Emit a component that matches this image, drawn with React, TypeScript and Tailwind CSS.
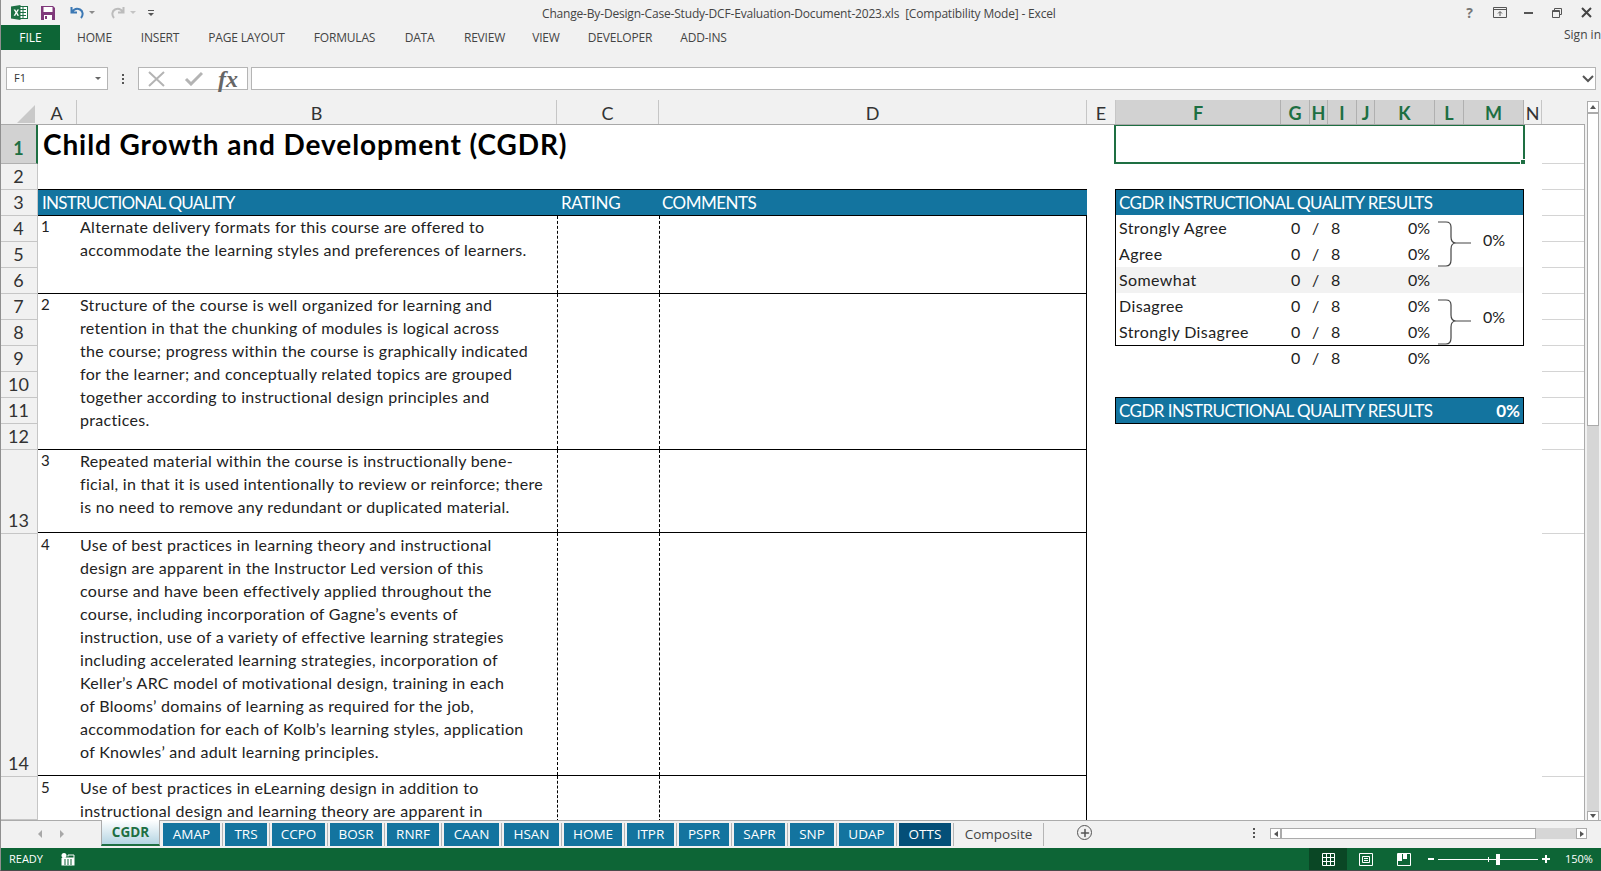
import { Plus } from 'lucide-react';

const ribbonTabs = [
  { label: 'HOME', w: 'w-[69px]' },
  { label: 'INSERT', w: 'w-[62px]' },
  { label: 'PAGE LAYOUT', w: 'w-[111px]' },
  { label: 'FORMULAS', w: 'w-[85px]' },
  { label: 'DATA', w: 'w-[65px]' },
  { label: 'REVIEW', w: 'w-[65px]' },
  { label: 'VIEW', w: 'w-[58px]' },
  { label: 'DEVELOPER', w: 'w-[90px]' },
  { label: 'ADD-INS', w: 'w-[77px]' },
];

const columns = [
  { label: 'A', w: 'w-[40px]' },
  { label: 'B', w: 'w-[480px]' },
  { label: 'C', w: 'w-[102px]' },
  { label: 'D', w: 'w-[428px]' },
  { label: 'E', w: 'w-[29px]' },
  { label: 'F', w: 'w-[165px]', on: true },
  { label: 'G', w: 'w-[29px]', on: true },
  { label: 'H', w: 'w-[18px]', on: true },
  { label: 'I', w: 'w-[29px]', on: true },
  { label: 'J', w: 'w-[18px]', on: true },
  { label: 'K', w: 'w-[60px]', on: true },
  { label: 'L', w: 'w-[29px]', on: true },
  { label: 'M', w: 'w-[60px]', on: true },
  { label: 'N', w: 'w-[18px]' },
];

const rows = [
  { n: '1', h: 'h-[39px]', on: true },
  { n: '2', h: 'h-[26px]' },
  { n: '3', h: 'h-[26px]' },
  { n: '4', h: 'h-[26px]' },
  { n: '5', h: 'h-[26px]' },
  { n: '6', h: 'h-[26px]' },
  { n: '7', h: 'h-[26px]' },
  { n: '8', h: 'h-[26px]' },
  { n: '9', h: 'h-[26px]' },
  { n: '10', h: 'h-[26px]' },
  { n: '11', h: 'h-[26px]' },
  { n: '12', h: 'h-[26px]' },
  { n: '13', h: 'h-[84px]' },
  { n: '14', h: 'h-[243px]' },
  { n: '', h: 'h-[43px]' },
];

const items = [
  {
    n: '1',
    h: 'h-[78px]',
    nudge: '-mt-px',
    lines: [
      'Alternate delivery formats for this course are offered to',
      'accommodate the learning styles and preferences of learners.',
    ],
  },
  {
    n: '2',
    h: 'h-[156px]',
    nudge: '-mt-px',
    lines: [
      'Structure of the course is well organized for learning and',
      'retention in that the chunking of modules is logical across',
      'the course; progress within the course is graphically indicated',
      'for the learner; and conceptually related topics are grouped',
      'together according to instructional design principles and',
      'practices.',
    ],
  },
  {
    n: '3',
    h: 'h-[84px]',
    nudge: '-mt-px',
    lines: [
      'Repeated material within the course is instructionally bene-',
      'ficial, in that it is used intentionally to review or reinforce; there',
      'is no need to remove any redundant or duplicated material.',
    ],
  },
  {
    n: '4',
    h: 'h-[243px]',
    nudge: 'mt-0',
    lines: [
      'Use of best practices in learning theory and instructional',
      'design are apparent in the Instructor Led version of this',
      'course and have been effectively applied throughout the',
      'course, including incorporation of Gagne\u2019s events of',
      'instruction, use of a variety of effective learning strategies',
      'including accelerated learning strategies, incorporation of',
      'Keller\u2019s ARC model of motivational design, training in each',
      'of Blooms\u2019 domains of learning as required for the job,',
      'accommodation for each of Kolb\u2019s learning styles, application',
      'of Knowles\u2019 and adult learning principles.',
    ],
  },
  {
    n: '5',
    h: 'h-[44px]',
    nudge: 'mt-0',
    lines: [
      'Use of best practices in eLearning design in addition to',
      'instructional design and learning theory are apparent in',
    ],
  },
];

const sheetTabs = [
  { label: 'AMAP', w: 'w-[57px]' },
  { label: 'TRS', w: 'w-[42px]' },
  { label: 'CCPO', w: 'w-[53px]' },
  { label: 'BOSR', w: 'w-[52px]' },
  { label: 'RNRF', w: 'w-[52px]' },
  { label: 'CAAN', w: 'w-[55px]' },
  { label: 'HSAN', w: 'w-[55px]' },
  { label: 'HOME', w: 'w-[58px]' },
  { label: 'ITPR', w: 'w-[47px]' },
  { label: 'PSPR', w: 'w-[50px]' },
  { label: 'SAPR', w: 'w-[51px]' },
  { label: 'SNP', w: 'w-[44px]' },
  { label: 'UDAP', w: 'w-[55px]' },
];

const RESULT_GRID = 'grid grid-cols-[175px_21px_19px_18px_82px_92px]';

function ExcelLogo() {
  return (
    <svg width="17" height="15" viewBox="0 0 17 15" className="shrink-0">
      <rect x="6" y="1.5" width="10.5" height="12" fill="#fff" stroke="#1d7044" />
      <path d="M9 4.5h6M9 7.5h6M9 10.5h6M12 2v11" stroke="#1d7044" />
      <path d="M0 1.5 9.5 0v15L0 13.5z" fill="#1d7044" />
      <path d="M2.6 4.4h1.7l1 2 1-2H8L6.200 7.500 8 10.700H6.300l-1-2.100-1 2.100H2.600l1.900-3.200z" fill="#fff" />
    </svg>
  );
}

function SaveIcon() {
  return (
    <svg width="14" height="14" viewBox="0 0 14 14" className="shrink-0">
      <path d="M0 0h12l2 2v12H0z" fill="#80397b" />
      <rect x="2.500" y="1" width="9" height="5" fill="#fff" />
      <rect x="3" y="9" width="8" height="5" fill="#fff" />
      <rect x="4" y="10" width="2" height="3" fill="#80397b" />
    </svg>
  );
}

function UndoIcon({ color, flip }: { color: string; flip?: boolean }) {
  return (
    <svg width="15" height="13" viewBox="0 0 15 13" className={flip ? '-scale-x-100 shrink-0' : 'shrink-0'}>
      <path d="M1.500 1v5.500H7M2 6c2-3 5-4 8-2.500 3 1.500 3.500 5.500 1 8.500" fill="none" stroke={color} strokeWidth="2" />
    </svg>
  );
}

function Caret({ color = '#8a8a8a' }: { color?: string }) {
  return <span className="block h-0 w-0 border-x-[3px] border-t-[3px] border-x-transparent" style={{ borderTopColor: color }} />;
}

function TitleBar() {
  return (
    <div className="relative flex h-[25px] shrink-0 items-center">
      <div className="ml-[10px]"><ExcelLogo /></div>
      <div className="ml-[13px]"><SaveIcon /></div>
      <div className="ml-[15px]"><UndoIcon color="#3c78b4" /></div>
      <div className="ml-[4px]"><Caret /></div>
      <div className="ml-[15px]"><UndoIcon color="#bcbcbc" flip /></div>
      <div className="ml-[5px]"><Caret color="#c4c4c4" /></div>
      <div className="ml-[12px] flex flex-col items-center gap-[2px]">
        <span className="h-px w-[6px] bg-[#555]" />
        <Caret color="#555" />
      </div>
      <div className="ml-[388px] whitespace-nowrap pt-[2px] text-[12px] tracking-[-0.18px] text-[#444]">
        Change-By-Design-Case-Study-DCF-Evaluation-Document-2023.xls&nbsp; [Compatibility Mode] - Excel
      </div>
      <div className="ml-auto mr-[9px] flex items-center">
        <span className="text-[14px] font-bold text-[#777]">?</span>
        <svg width="14" height="11" viewBox="0 0 14 11" className="ml-[20px]">
          <path d="M.5.5h13v10H.5zM.5 2.500h13M7 9V5M5 6.500l2-2 2 2" fill="none" stroke="#555" />
        </svg>
        <span className="ml-[17px] h-[2px] w-[9px] bg-[#555]" />
        <svg width="10" height="10" viewBox="0 0 10 10" className="ml-[19px]">
          <path d="M2.500 2.500V.5h7v6h-2M.5 2.500h7v7h-7zM.5 3.500h7" fill="none" stroke="#555" />
        </svg>
        <svg width="11" height="11" viewBox="0 0 11 11" className="ml-[19px]">
          <path d="M1 1l9 9M10 1l-9 9" fill="none" stroke="#444" strokeWidth="2" />
        </svg>
      </div>
    </div>
  );
}

function RibbonTabs() {
  return (
    <div className="flex h-[25px] shrink-0 items-center">
      <div className="flex h-full w-[59px] items-center justify-center bg-[#0d6536] text-[12px] text-white">FILE</div>
      <div className="flex">
        {ribbonTabs.map((tab) => (
          <div key={tab.label} className={`${tab.w} whitespace-nowrap text-center text-[12px] tracking-[-0.2px] text-[#444]`}>
            {tab.label}
          </div>
        ))}
      </div>
      <div className="ml-auto -mt-[6px] text-[12px] text-[#444]">Sign in</div>
    </div>
  );
}

function FormulaBar() {
  return (
    <div className="mt-[17px] flex h-[23px] shrink-0 items-stretch">
      <div className="ml-[5px] flex w-[102px] items-center border border-[#b5b5b5] bg-white pl-[7px] pr-[6px] text-[11px] text-[#333]">
        F1
        <span className="ml-auto"><Caret color="#666" /></span>
      </div>
      <div className="flex w-[30px] flex-col items-center justify-center gap-[2px]">
        <span className="h-[2px] w-[2px] bg-[#555]" />
        <span className="h-[2px] w-[2px] bg-[#555]" />
        <span className="h-[2px] w-[2px] bg-[#555]" />
      </div>
      <div className="flex w-[110px] items-center border border-[#b5b5b5] bg-white pl-[9px]">
        <svg width="17" height="16" viewBox="0 0 17 16">
          <path d="M1 1l15 14M16 1L1 15" fill="none" stroke="#b4b4b4" strokeWidth="2" />
        </svg>
        <svg width="19" height="15" viewBox="0 0 19 15" className="ml-[19px]">
          <path d="M2 8l5 5L18 2" fill="none" stroke="#b4b4b4" strokeWidth="3" />
        </svg>
        <span className="ml-[15px] font-['Liberation_Serif',serif] text-[24px] font-bold italic leading-none text-[#666]">fx</span>
      </div>
      <div className="ml-[3px] flex w-[1345px] items-center justify-end border border-[#b5b5b5] bg-white pr-[1px]">
        <svg width="12" height="8" viewBox="0 0 12 8">
          <path d="M1 1l5 5 5-5" fill="none" stroke="#555" strokeWidth="2" />
        </svg>
      </div>
    </div>
  );
}

function ColumnHeader() {
  return (
    <div className="flex h-[25px] shrink-0 border-b border-[#a9a9a9]">
      <div className="flex w-[36px] items-end justify-end pb-[1px] pr-[2px]">
        <span className="h-0 w-0 border-b-[18px] border-l-[18px] border-b-[#c9c9c9] border-l-transparent" />
      </div>
      {columns.map((col) => (
        <div
          key={col.label}
          className={
            col.on
              ? `${col.w} flex items-center justify-center border-r border-[#b0b0b0] bg-[#d2d2d2] pt-[2px] font-[Lato,sans-serif] text-[18px] font-bold text-[#1d6f42]`
              : `${col.w} flex items-center justify-center border-r border-[#c6c6c6] pt-[2px] font-[Lato,sans-serif] text-[18px] text-[#333]`
          }
        >
          {col.label}
        </div>
      ))}
    </div>
  );
}

function RowHeader() {
  return (
    <div className="flex w-[37px] shrink-0 flex-col font-[Lato,sans-serif]">
      {rows.map((row) => (
        <div
          key={row.n + row.h}
          className={
            row.on
              ? `${row.h} flex items-end justify-center border-b border-r-2 border-b-[#b0b0b0] border-r-[#1e6f42] bg-[#d2d2d2] pb-[6px] text-[18px] font-bold leading-none text-[#1d6f42]`
              : `${row.h} flex items-end justify-center border-b border-r border-b-[#c6c6c6] border-r-[#c6c6c6] pb-[4px] pr-px text-[18px] leading-none text-[#333]`
          }
        >
          {row.n}
        </div>
      ))}
    </div>
  );
}

function QualityTable() {
  return (
    <div className="flex w-[1049px] shrink-0 flex-col text-[#222]">
      <div className="flex h-[38px] items-center pl-[5px] text-[28px] font-bold leading-none text-black tracking-[0.9px]">
        Child Growth and Development (CGDR)
      </div>
      <div className="h-[26px]" />
      <div className="grid h-[27px] grid-cols-[519px_102px_428px] items-center border-y border-black bg-[#13749f] text-[17px] leading-none text-white">
        <div className="pl-[4px] tracking-[-0.75px]">INSTRUCTIONAL QUALITY</div>
        <div className="pl-[4px] tracking-[-0.3px]">RATING</div>
        <div className="pl-[3px] tracking-[-0.5px]">COMMENTS</div>
      </div>
      {items.map((item, i) => (
        <div
          key={item.n}
          className={
            i === items.length - 1
              ? `${item.h} grid grid-cols-[39px_480px_102px_428px] overflow-hidden border-r border-black`
              : `${item.h} grid grid-cols-[39px_480px_102px_428px] border-b border-r border-black`
          }
        >
          <div className={`${item.nudge} pl-[3px] text-[15px] leading-[23px]`}>{item.n}</div>
          <div className={`${item.nudge} pl-[3px] text-[16px] leading-[23px] tracking-[0.3px]`}>
            {item.lines.map((line) => (
              <div key={line} className="whitespace-nowrap">{line}</div>
            ))}
          </div>
          <div className="border-l border-dashed border-black" />
          <div className="border-l border-dashed border-black" />
        </div>
      ))}
    </div>
  );
}

function Brace() {
  return (
    <svg width="34" height="46" viewBox="0 0 34 46" className="ml-[7px] shrink-0 self-end">
      <path
        d="M0 1h8c4 0 5 2 5 5v10c0 4 1 6 5 6h15M18 22c-4 0-5 2-5 6v11c0 4-1 6-5 6H0"
        fill="none"
        stroke="#444"
        strokeWidth="1.200"
      />
    </svg>
  );
}

function ResultCells({ label, className = '' }: { label: string; className?: string }) {
  return (
    <div className={`col-span-5 grid grid-cols-subgrid items-center ${className}`}>
      <div className="whitespace-nowrap pl-[3px] tracking-[0.4px]">{label}</div>
      <div>0</div>
      <div>/</div>
      <div>8</div>
      <div className="pr-[1px] text-right">0%</div>
    </div>
  );
}

function ResultsPanel() {
  return (
    <div className="relative flex w-[409px] shrink-0 flex-col text-[16px] leading-none text-[#222]">
      <div className="relative z-10 -ml-[1px] -mt-[1px] h-[40px] w-[411px] border-2 border-[#1e6f42]">
        <span className="absolute -bottom-[3px] -right-[3px] h-[6px] w-[6px] border border-white bg-[#1e6f42]" />
      </div>
      <div className="h-[25px]" />
      <div className="flex h-[157px] flex-col border border-black">
        <div className="flex h-[25px] shrink-0 items-center bg-[#13749f] pb-px pl-[3px] text-[17px] text-white tracking-[-0.55px]">
          CGDR INSTRUCTIONAL QUALITY RESULTS
        </div>
        <div className={`${RESULT_GRID} flex-1 auto-rows-[26px]`}>
          <ResultCells label="Strongly Agree" />
          <div className="row-span-2 flex items-center">
            <Brace />
            <span className="-mt-[2px] ml-[11px]">0%</span>
          </div>
          <ResultCells label="Agree" />
          <ResultCells label="Somewhat" className="col-span-6 grid-rows-[26px] bg-[#f2f2f2]" />
          <ResultCells label="Disagree" />
          <div className="row-span-2 flex items-center">
            <Brace />
            <span className="-mt-[4px] ml-[11px]">0%</span>
          </div>
          <ResultCells label="Strongly Disagree" />
        </div>
      </div>
      <div className={`${RESULT_GRID} h-[25px] items-center pb-[2px] pl-px`}>
        <div />
        <div>0</div>
        <div>/</div>
        <div>8</div>
        <div className="pr-[1px] text-right">0%</div>
      </div>
      <div className="h-[26px]" />
      <div className="flex h-[27px] items-center justify-between border border-black bg-[#13749f] px-[3px] text-[17px] text-white tracking-[-0.55px]">
        <span>CGDR INSTRUCTIONAL QUALITY RESULTS</span>
        <span className="font-bold tracking-normal">0%</span>
      </div>
    </div>
  );
}

function RowTicks() {
  return (
    <div className="flex min-w-0 flex-1 flex-col">
      {rows.map((row) => (
        <div key={row.n + row.h} className={`${row.h} ${row.n ? 'border-b border-[#d4d4d4]' : ''}`} />
      ))}
    </div>
  );
}

function ScrollButton({ dir }: { dir: 'left' | 'right' }) {
  const shape =
    dir === 'left'
      ? 'border-y-[3px] border-r-[4px] border-y-transparent border-r-[#555]'
      : 'border-y-[3px] border-l-[4px] border-y-transparent border-l-[#555]';
  return (
    <div className="flex h-[11px] w-[11px] shrink-0 items-center justify-center border border-[#ababab] bg-white">
      <span className={`block h-0 w-0 ${shape}`} />
    </div>
  );
}

function VerticalScrollbar() {
  return (
    <div className="ml-[2px] mt-[1px] flex h-[720px] w-[12px] flex-col bg-[#d6d6d6]">
      <div className="flex h-[12px] items-center justify-center border border-[#ababab] bg-white">
        <span className="block h-0 w-0 border-x-[3px] border-b-[4px] border-x-transparent border-b-[#555]" />
      </div>
      <div className="h-[313px] border border-[#ababab] bg-white" />
      <div className="mt-auto flex h-[10px] items-center justify-center border border-[#ababab] bg-white">
        <span className="block h-0 w-0 border-x-[3px] border-t-[4px] border-x-transparent border-t-[#555]" />
      </div>
    </div>
  );
}

function SheetTabs() {
  return (
    <div className="flex h-[28px] shrink-0 items-start border-t border-[#ababab]">
      <div className="flex w-[100px] items-center justify-center gap-[18px] pt-[9px]">
        <span className="h-0 w-0 border-y-[4px] border-r-[4px] border-y-transparent border-r-[#a8a8a8]" />
        <span className="h-0 w-0 border-y-[4px] border-l-[4px] border-y-transparent border-l-[#a8a8a8]" />
      </div>
      <div className="-mt-px flex h-[26px] w-[59px] items-center justify-center border-b-2 border-l border-r border-[#1e6f42] border-l-[#ababab] border-r-[#ababab] border-t-0 bg-linear-to-b from-white to-[#b5d5e3] pt-px text-[13.5px] font-bold text-[#1e6f42]">
        CGDR
      </div>
      <div className="ml-[3px] mt-[2px] flex items-stretch text-[13.5px] text-white">
        {sheetTabs.map((tab) => (
          <div key={tab.label} className="flex items-stretch">
            <div className={`${tab.w} flex h-[23px] items-center justify-center bg-[#13749f] pb-px`}>{tab.label}</div>
            <span className="mx-[2px] w-px bg-[#b5b5b5]" />
          </div>
        ))}
        <div className="flex h-[23px] w-[52px] items-center justify-center bg-[#044f78] pb-px">OTTS</div>
        <span className="ml-[2px] w-px bg-[#b5b5b5]" />
        <div className="flex h-[23px] w-[89px] items-center justify-center pb-px text-[#444]">Composite</div>
        <span className="w-px bg-[#b5b5b5]" />
      </div>
      <div className="ml-[33px] mt-[4px] flex h-[15px] w-[15px] items-center justify-center rounded-full border border-[#555] text-[#555]">
        <Plus size={12} strokeWidth={3} />
      </div>
      <div className="ml-[161px] mt-[7px] flex flex-col gap-[2px]">
        <span className="h-[2px] w-[2px] bg-[#555]" />
        <span className="h-[2px] w-[2px] bg-[#555]" />
        <span className="h-[2px] w-[2px] bg-[#555]" />
      </div>
      <div className="ml-[15px] mt-[7px] flex h-[11px] w-[317px] bg-[#d6d6d6]">
        <ScrollButton dir="left" />
        <div className="w-[255px] border border-[#ababab] bg-white" />
        <div className="ml-auto"><ScrollButton dir="right" /></div>
      </div>
    </div>
  );
}

function StatusBar() {
  return (
    <div className="flex h-[22px] shrink-0 items-center bg-[#0d6536] text-[11px] text-white">
      <span className="ml-[8px] w-[52px]">READY</span>
      <svg width="14" height="13" viewBox="0 0 14 13">
        <circle cx="3" cy="2.500" r="2.500" fill="#fff" />
        <path d="M1 5h12V2H7v1.500" fill="none" stroke="#fff" />
        <rect x=".5" y="5" width="13" height="7.500" fill="#fff" />
        <path d="M3 7h2M6 7h2M9 7h2M3 9h2M6 9h2M9 9h2M3 11h2M6 11h2M9 11h2" stroke="#0d6536" />
      </svg>
      <div className="ml-[1234px] flex h-full w-[38px] items-center justify-center bg-[#0a4725]">
        <svg width="13" height="13" viewBox="0 0 13 13">
          <path d="M.5.5h12v12H.5zM.5 4.500h12M.5 8.500h12M4.500.5v12M8.500.5v12" fill="none" stroke="#fff" />
        </svg>
      </div>
      <svg width="14" height="13" viewBox="0 0 14 13" className="ml-[12px]">
        <path d="M.5.5h13v12H.5zM3.500 3.500h7v6h-7zM5 5.500h4M5 7.500h4" fill="none" stroke="#fff" />
      </svg>
      <svg width="14" height="13" viewBox="0 0 14 13" className="ml-[24px]">
        <path d="M.5.5h13v12H.5z" fill="none" stroke="#fff" />
        <path d="M1 1h4v7H1zM6 1h4v5H6z" fill="#fff" />
      </svg>
      <span className="ml-[17px] h-[2px] w-[6px] bg-white" />
      <div className="relative ml-[4px] h-px w-[100px] bg-white">
        <span className="absolute left-[50px] -top-[2px] h-[5px] w-px bg-white" />
        <span className="absolute left-[58px] -top-[5px] h-[11px] w-[4px] bg-white" />
      </div>
      <span className="relative ml-[4px] h-[2px] w-[8px] bg-white">
        <span className="absolute left-[3px] -top-[3px] h-[8px] w-[2px] bg-white" />
      </span>
      <span className="ml-[15px]">150%</span>
    </div>
  );
}

export default function App() {
  return (
    <div className="flex h-[871px] w-[1601px] flex-col overflow-hidden border-b border-l border-b-[#4a4a4a] border-l-[#8f8f8f] bg-[#f1f1f1] font-['Open_Sans',sans-serif]">
      <TitleBar />
      <RibbonTabs />
      <FormulaBar />
      <div className="flex h-[730px] shrink-0 pt-[10px]">
        <div className="flex w-[1584px] shrink-0 flex-col">
          <ColumnHeader />
          <div className="flex min-h-0 flex-1 overflow-hidden">
            <RowHeader />
            <div className="flex min-w-0 flex-1 overflow-hidden border-r border-r-[#ababab] bg-white font-[Lato,sans-serif]">
              <QualityTable />
              <div className="w-[28px] shrink-0" />
              <ResultsPanel />
              <div className="w-[18px] shrink-0" />
              <RowTicks />
            </div>
          </div>
        </div>
        <VerticalScrollbar />
      </div>
      <SheetTabs />
      <StatusBar />
    </div>
  );
}
